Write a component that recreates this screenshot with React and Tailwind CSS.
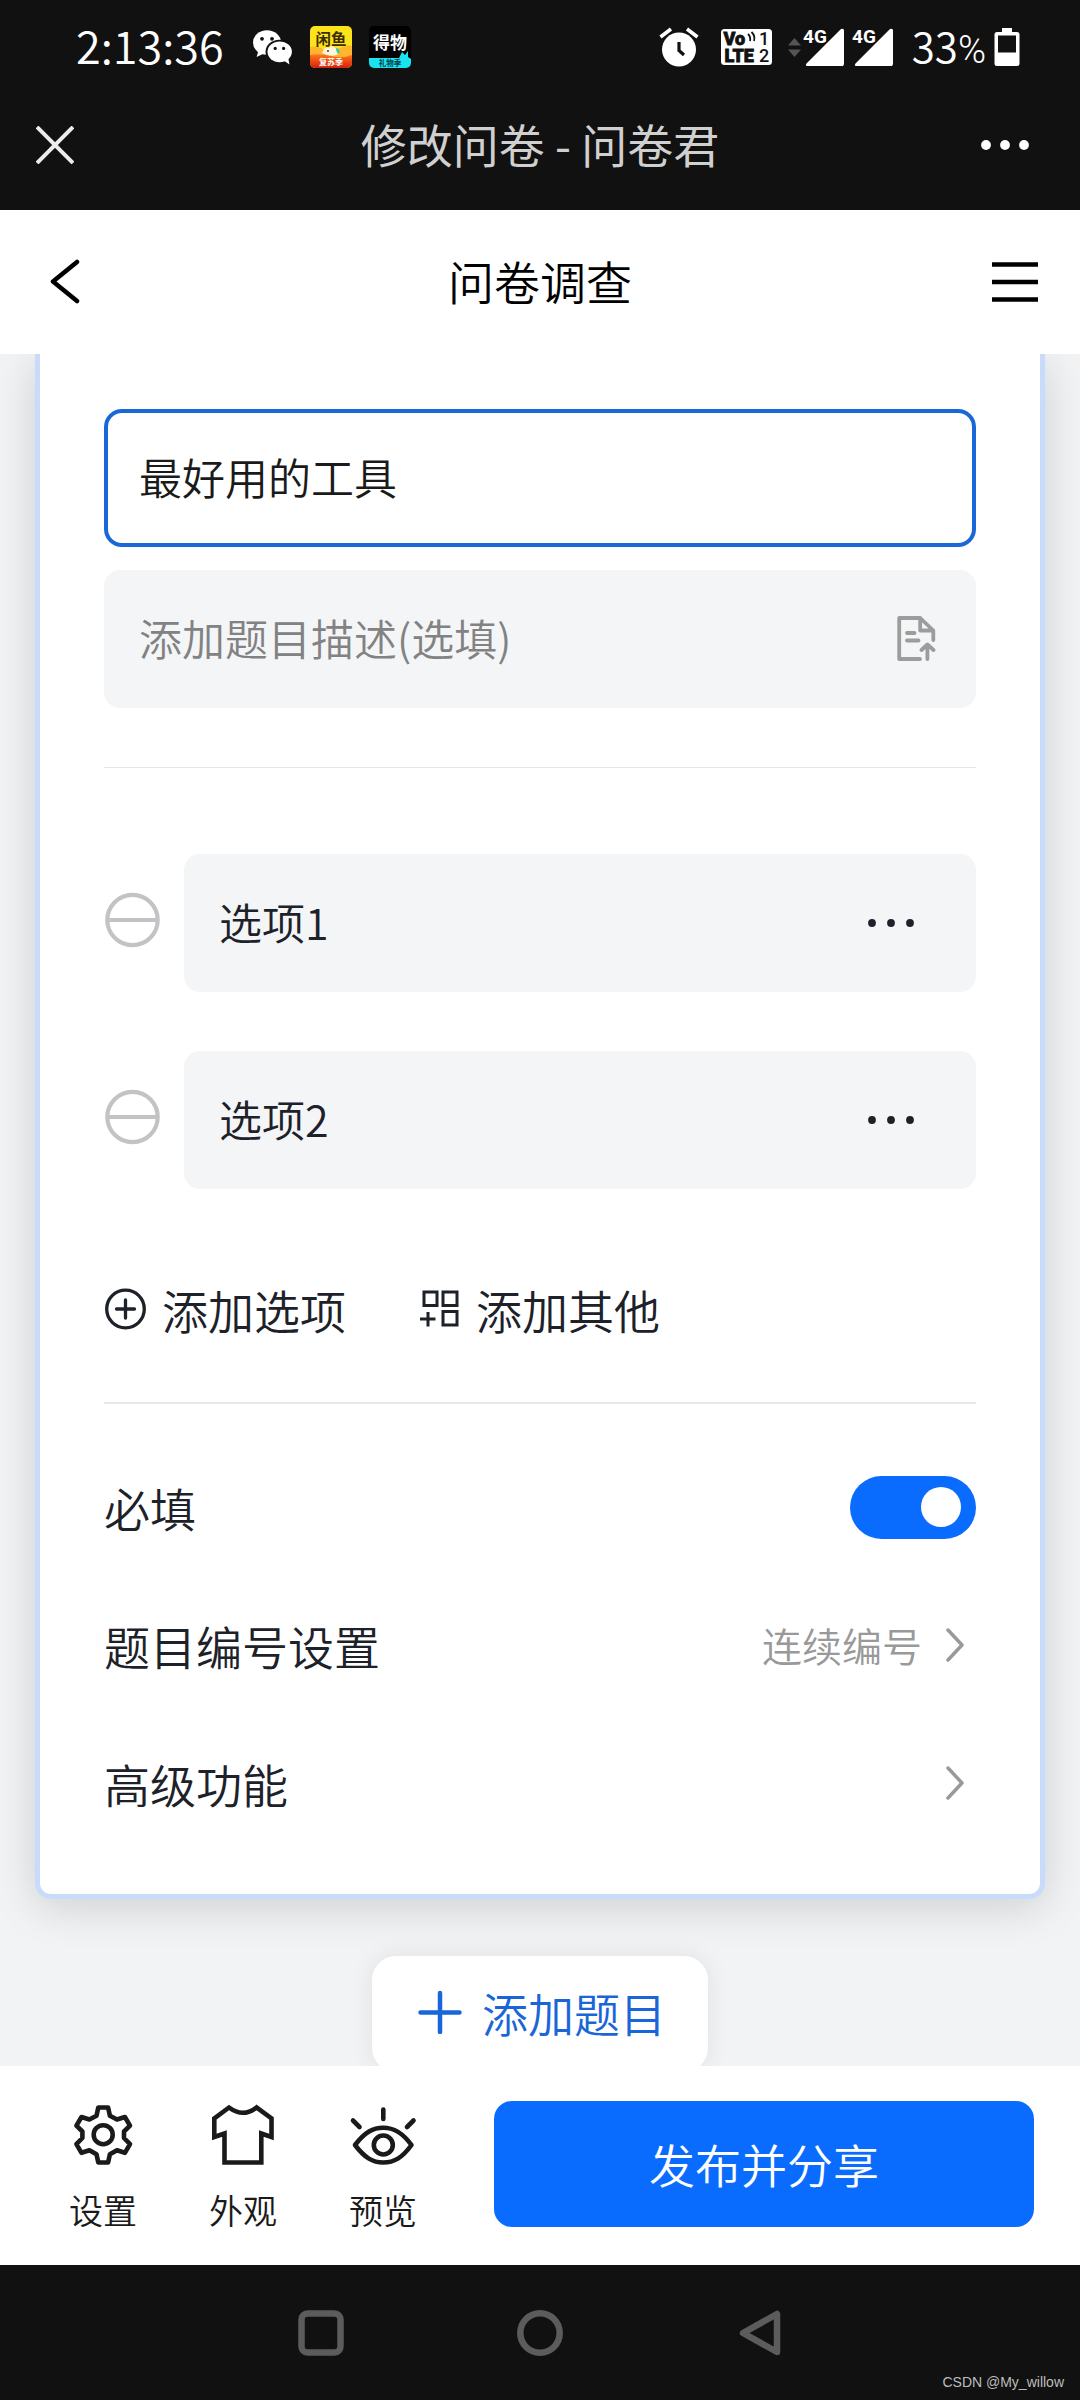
import { useState } from "react";

const FONT = "font-['Noto_Sans_CJK_SC','Noto_Sans',sans-serif] font-[350]";

function WechatIcon() {
  return (
    <svg className="h-9 w-10" viewBox="0 0 40 36" aria-hidden="true">
      <path d="M6 20 L3.6 28 L12 24 Z" fill="#fff" />
      <ellipse cx="14" cy="13.5" rx="14" ry="12.2" fill="#fff" />
      <ellipse cx="26.5" cy="22.8" rx="14" ry="12" fill="#111" />
      <path d="M30 31 L36.5 35.4 L35 28 Z" fill="#fff" />
      <ellipse cx="26.7" cy="22.8" rx="12.2" ry="10.4" fill="#fff" />
      <circle cx="9" cy="9.8" r="1.9" fill="#111" />
      <circle cx="19" cy="9.8" r="1.9" fill="#111" />
      <circle cx="22.2" cy="19.4" r="1.6" fill="#111" />
      <circle cx="30.6" cy="19.4" r="1.6" fill="#111" />
    </svg>
  );
}

function XianyuIcon() {
  return (
    <svg className="size-[42px]" viewBox="0 0 42 42" aria-hidden="true">
      <defs>
        <clipPath id="xy"><rect width="42" height="42" rx="5" /></clipPath>
        <linearGradient id="xyRed" x1="0" y1="0" x2="0" y2="1">
          <stop offset="0" stopColor="#ff7a1c" />
          <stop offset="1" stopColor="#d3200c" />
        </linearGradient>
      </defs>
      <g clipPath="url(#xy)">
        <rect width="42" height="42" fill="#ffe31a" />
        <path d="M0 21 Q8 19 14 24 T30 22 Q37 18 42 20 V32 H0 Z" fill="#ffb52e" />
        <path d="M0 29 Q10 27 21 30 T42 29 V42 H0 Z" fill="url(#xyRed)" />
        <text x="21" y="19" textAnchor="middle" fontSize="15.5" fontWeight="700" fill="#3a2c05">闲鱼</text>
        <path d="M12 27 Q15 20 19 22 Q22 18 25 22 Q30 24 28 28 Q22 32 12 27 Z" fill="#fff6e0" />
        <path d="M26 22 Q31 22 29 28 Q26 27 26 22 Z" fill="#3fc99a" />
        <circle cx="18" cy="25" r="1" fill="#5a3a10" />
        <text x="21" y="39" textAnchor="middle" fontSize="8" fontWeight="700" fill="#fff">复苏季</text>
      </g>
    </svg>
  );
}

function DewuIcon() {
  return (
    <svg className="size-[42px]" viewBox="0 0 42 42" aria-hidden="true">
      <defs><clipPath id="dw"><rect width="42" height="42" rx="5" /></clipPath></defs>
      <g clipPath="url(#dw)">
        <rect width="42" height="42" fill="#000" />
        <path d="M0 32 H30 L33 26 L36 29 L39 25 V31 L42 33 V42 H0 Z" fill="#19e3ee" />
        <text x="21" y="23" textAnchor="middle" fontSize="17" fontWeight="700" fill="#fff">得物</text>
        <text x="21" y="40" textAnchor="middle" fontSize="7.5" fontWeight="700" fill="#053a44">礼物季</text>
      </g>
    </svg>
  );
}

function AlarmIcon() {
  return (
    <svg className="size-10" viewBox="0 0 40 40" aria-hidden="true">
      <circle cx="20" cy="22.5" r="17" fill="#fff" />
      <path d="M1.5 10 L12 2 M38.5 10 L28 2" stroke="#fff" strokeWidth="3.6" />
      <path d="M20 15 V23.5 L25 28" stroke="#111" strokeWidth="3.2" fill="none" />
    </svg>
  );
}

function VolteIcon() {
  return (
    <svg className="h-9 w-[51px] overflow-visible" viewBox="0 0 51 36" aria-hidden="true">
      <rect width="51" height="36" rx="3.5" fill="#fff" />
      <g fill="#111" stroke="#111" strokeWidth="0.8" fontFamily="Roboto" fontWeight="900" fontSize="18">
        <text x="2.5" y="16">Vo</text>
        <text x="3.5" y="33">LTE</text>
      </g>
      <g fill="#111" fontFamily="Roboto" fontWeight="500" fontSize="18">
        <text x="38" y="16">1</text>
        <text x="38" y="33">2</text>
      </g>
      <path d="M27 5 Q30 8 29 12 M30.5 3 Q34.5 7 33 12" stroke="#111" strokeWidth="1.8" fill="none" />
    </svg>
  );
}

function SignalIcon() {
  return (
    <svg className="h-[38px] w-[106px] overflow-visible" viewBox="0 0 106 38" aria-hidden="true">
      <path d="M6.5 10 L13 17.5 H0 Z M6.5 29 L13 21.5 H0 Z" fill="#555" />
      {[0, 49].map((x) => (
        <g key={x} fill="#fff">
          <path d={`M${x + 55} 0.5 V38 H${x + 19} Q${x + 17} 37.5 ${x + 18.5} 35.5 L${x + 53} 1 Q${x + 55} 0 ${x + 56} 2 V36 Q${x + 56} 38 ${x + 54} 38 Z`} />
          <text x={x + 15} y="15" fontFamily="Roboto" fontWeight="700" fontSize="19">4G</text>
        </g>
      ))}
    </svg>
  );
}

function BatteryIcon() {
  return (
    <svg className="h-[38px] w-[26px]" viewBox="0 0 26 38" aria-hidden="true">
      <path fillRule="evenodd" d="M8 0 H18 V4 H23 Q25.500 4 25.500 6.500 V35.500 Q25.500 38 23 38 H3 Q0.500 38 0.500 35.500 V6.500 Q0.500 4 3 4 H8 Z M4 7.500 V24.500 H22 V7.500 Z" fill="#fff" />
    </svg>
  );
}

function Dots({ className, r }) {
  return (
    <svg className={className} viewBox="0 0 50 12" fill="currentColor" aria-hidden="true">
      <circle cx="6" cy="6" r={r} />
      <circle cx="25" cy="6" r={r} />
      <circle cx="44" cy="6" r={r} />
    </svg>
  );
}

function Chevron() {
  return (
    <svg className="h-[34px] w-[18px]" viewBox="0 0 18 34" fill="none" stroke="#999" strokeWidth="3.5" strokeLinecap="round" strokeLinejoin="round" aria-hidden="true">
      <path d="M2 2 L16 17 L2 32" />
    </svg>
  );
}

function OptionRow({ name, value, onChange }) {
  return (
    <li className="flex items-center gap-6">
      <button type="button" aria-label={`删除${name}`} className="shrink-0">
        <svg className="size-14 overflow-visible" viewBox="0 0 56 56" fill="none" stroke="#c3c3c6" strokeWidth="4.200" aria-hidden="true">
          <circle cx="28.500" cy="25" r="25.200" />
          <path d="M3 25 H54" />
        </svg>
      </button>
      <div className="flex h-[138px] min-w-0 flex-1 items-center rounded-2xl bg-[#f4f5f7] pr-[60px] pl-[35px]">
        <input
          aria-label={name}
          value={value}
          onChange={(e) => onChange(e.target.value)}
          className="h-16 min-w-0 flex-1 bg-transparent pb-1 text-[43px] text-[#1d2129] outline-none"
        />
        <button type="button" aria-label={`${name}更多操作`} className="text-[#1d2129]">
          <Dots className="h-3 w-[50px]" r="3.900" />
        </button>
      </div>
    </li>
  );
}

const TOOLS = [
  {
    label: "设置",
    icon: (
      <>
        <path d="M27.300 6.500 H37.100 L38.900 14.700 L46 18.500 L53.900 16 L59 24.700 L53 30.500 V37 L59 43.200 L53.900 51.800 L46 49.300 L38.900 53.300 L37.100 61.500 H27.300 L25.500 53.300 L18.400 49.300 L10.500 51.800 L5.400 43.200 L11.400 37 V30.500 L5.400 24.700 L10.500 16 L18.400 18.500 L25.500 14.700 Z" />
        <circle cx="32.200" cy="33.700" r="9.500" />
      </>
    ),
  },
  {
    label: "外观",
    icon: (
      <path strokeLinejoin="miter" d="M18 6.500 Q32 17 45.500 6.500 L60.500 17.500 V36 L50.300 32.500 V61.500 H13.500 V32.500 L3.300 36 V17.500 Z" />
    ),
  },
  {
    label: "预览",
    icon: (
      <>
        <path d="M4 44 C14 31 22 26.700 32.300 26.700 S51 31 60.500 44 C51 57 43 61.500 32.300 61.500 S14 57 4 44 Z" />
        <circle cx="32.300" cy="44" r="9.500" />
        <path d="M32.300 8.500 V18 M2 19.500 L8.500 26 M62.500 19.500 L56 26" />
      </>
    ),
  },
];

export default function App() {
  const [title, setTitle] = useState("最好用的工具");
  const [desc, setDesc] = useState("");
  const [options, setOptions] = useState(["选项1", "选项2"]);
  const [required, setRequired] = useState(true);

  return (
    <div className={`flex min-h-screen flex-col bg-[#f2f3f5] text-[#1d2129] ${FONT}`}>
      <div className="bg-[#111] pb-3.5 text-white">
        <div className="flex h-[94px] items-center justify-between pr-[60px] pl-[76px]">
          <div className="flex items-center gap-[17px]">
            <time className="w-40 pb-1 text-[45px] leading-[60px]">2:13:36</time>
            <WechatIcon />
            <XianyuIcon />
            <DewuIcon />
          </div>
          <div className="flex items-center">
            <AlarmIcon />
            <span className="w-[22px]" />
            <VolteIcon />
            <span className="w-4" />
            <SignalIcon />
            <span className="ml-[18px] flex items-baseline text-[42px] leading-[60px]">
              33<span className="font-['Roboto',sans-serif] text-[38px] font-light">%</span>
            </span>
            <span className="ml-2"><BatteryIcon /></span>
          </div>
        </div>
        <div className="grid h-[102px] grid-cols-[1fr_auto_1fr] items-center px-9">
          <button type="button" aria-label="关闭" className="justify-self-start">
            <svg className="size-[38px]" viewBox="0 0 38 38" stroke="#ececec" strokeWidth="4" aria-hidden="true">
              <path d="M1 1 L37 37 M37 1 L1 37" />
            </svg>
          </button>
          <h1 className="pb-1 text-[46px] leading-[64px] font-normal text-[#d0d0d0]">修改问卷 - 问卷君</h1>
          <button type="button" aria-label="更多" className="mr-3.5 justify-self-end">
            <Dots className="h-3 w-[50px]" r="4.900" />
          </button>
        </div>
      </div>

      <header className="relative z-10 grid h-36 grid-cols-[1fr_auto_1fr] items-center bg-white px-[42px] text-black">
        <button type="button" aria-label="返回" className="ml-2 justify-self-start">
          <svg className="h-[46px] w-[30px]" viewBox="0 0 30 46" fill="none" stroke="currentColor" strokeWidth="4.500" strokeLinecap="round" strokeLinejoin="round" aria-hidden="true">
            <path d="M27 3 L3 22.500 L27 42" />
          </svg>
        </button>
        <h2 className="pb-1 text-[46px] leading-[64px]">问卷调查</h2>
        <button type="button" aria-label="菜单" className="justify-self-end">
          <svg className="h-10 w-[46px]" viewBox="0 0 46 40" stroke="currentColor" strokeWidth="4.500" aria-hidden="true">
            <path d="M0 2.500 H46 M0 20 H46 M0 37.500 H46" />
          </svg>
        </button>
      </header>

      <main className="flex flex-1 flex-col px-[35px]">
        <section className="rounded-b-2xl border-x-5 border-b-5 border-[#c8dbfb] bg-white px-16 pt-[55px] pb-[42px] shadow-[0_8px_44px_rgba(0,0,0,0.15)]">
          <input
            aria-label="题目标题"
            value={title}
            onChange={(e) => setTitle(e.target.value)}
            className="block h-[138px] w-full rounded-[18px] border-4 border-[#1a68d8] px-[31px] pb-1 text-[43px] text-[#1a1a1a] outline-none"
          />
          <div className="mt-[23px] flex h-[138px] items-center rounded-2xl bg-[#f4f5f7] pr-10 pl-[35px]">
            <input
              aria-label="题目描述"
              value={desc}
              onChange={(e) => setDesc(e.target.value)}
              placeholder="添加题目描述(选填)"
              className="h-16 min-w-0 flex-1 bg-transparent pb-1 text-[43px] outline-none placeholder:text-[#828282]"
            />
            <button type="button" aria-label="导入描述">
              <svg className="h-[46px] w-[39px]" viewBox="0 0 39 46" fill="none" stroke="#9c9c9c" strokeWidth="3.800" strokeLinecap="round" strokeLinejoin="round" aria-hidden="true">
                <path d="M23 43 H2.200 V2 H23.200 L36.300 14.500 V24 M23.200 2 V14.500 H36.300" />
                <path d="M10 17 H17.500 M10 24.500 H21.500 M30.400 29 V43 M24.500 34 L30.400 28.500 L36.500 34" />
              </svg>
            </button>
          </div>

          <hr className="mt-[59px] border-t border-[#e5e6e8]" />

          <ul className="mt-[86px] flex flex-col gap-[59px]">
            {options.map((value, i) => (
              <OptionRow
                key={i}
                name={`选项${i + 1}`}
                value={value}
                onChange={(next) => setOptions(options.map((o, j) => (j === i ? next : o)))}
              />
            ))}
          </ul>

          <div className="mt-[88px] flex h-16 items-center gap-[74px] text-[46px] leading-[64px]">
            <button type="button" className="flex items-center gap-4">
              <svg className="size-[42px]" viewBox="0 0 42 42" fill="none" stroke="currentColor" strokeWidth="3.300" strokeLinecap="round" aria-hidden="true">
                <circle cx="21.500" cy="21" r="18.800" />
                <path d="M12.500 21 H30.500 M21.500 12 V30" />
              </svg>
              添加选项
            </button>
            <button type="button" className="flex items-center gap-4">
              <svg className="size-10" viewBox="0 0 40 40" fill="none" stroke="currentColor" strokeWidth="3" aria-hidden="true">
                <path d="M4 3 H17 V16.500 H4 Z M23 3 H37 V16.500 H23 Z M23 22.500 H37 V36 H23 Z M0 30 H15.500 M8 23 V37.500" />
              </svg>
              添加其他
            </button>
          </div>

          <hr className="mt-[61px] border-t-2 border-[#e8e8e8]" />

          <div className="mt-[34px] text-[46px] leading-[64px]">
            <label className="flex h-[138px] items-center justify-between">
              必填
              <input
                type="checkbox"
                role="switch"
                checked={required}
                onChange={(e) => setRequired(e.target.checked)}
                className="flex h-[63px] w-[126px] appearance-none items-center rounded-full bg-[#c9cdd4] px-[15px] before:block before:size-10 before:rounded-full before:bg-white checked:justify-end checked:bg-[#0a6cff]"
              />
            </label>
            <button type="button" className="flex h-[138px] w-full items-center pr-3">
              题目编号设置
              <span className="mr-6 ml-auto text-[40px] text-[#999]">连续编号</span>
              <Chevron />
            </button>
            <button type="button" className="flex h-[138px] w-full items-center justify-between pr-3">
              高级功能
              <Chevron />
            </button>
          </div>
        </section>

        <button
          type="button"
          className="mt-[57px] -mb-1.5 flex h-[116px] items-center gap-5 self-center rounded-3xl bg-white pr-[42px] pb-1 pl-[46px] text-[46px] leading-[64px] text-[#1a66d8] shadow-[0_0_24px_rgba(0,0,0,0.08)]"
        >
          <svg className="size-11" viewBox="0 0 44 44" fill="none" stroke="currentColor" strokeWidth="4.500" strokeLinecap="round" aria-hidden="true">
            <path d="M2.500 22.500 H41.500 M22 3 V42" />
          </svg>
          添加题目
        </button>
      </main>

      <footer className="relative z-10">
        <div className="flex items-start gap-[77px] bg-white pt-[35px] pr-[46px] pb-9 pl-[69px]">
          <div className="flex gap-[72px]">
            {TOOLS.map((tool) => (
              <button type="button" key={tool.label} className="flex w-[68px] flex-col items-center gap-[26px] text-[34px] leading-[38px] text-[#1a1a1a]">
                <svg className="size-16 overflow-visible" viewBox="0 0 64 64" fill="none" stroke="currentColor" strokeWidth="4.600" strokeLinecap="round" strokeLinejoin="round" aria-hidden="true">
                  {tool.icon}
                </svg>
                {tool.label}
              </button>
            ))}
          </div>
          <button type="button" className="h-[126px] flex-1 rounded-[18px] bg-[#0a6cff] pb-0.5 text-[46px] leading-[64px] text-white">
            发布并分享
          </button>
        </div>
        <div className="relative flex h-[135px] items-center justify-center gap-[173px] bg-[#111]">
          <button type="button" aria-label="最近任务">
            <svg className="size-[46px]" viewBox="0 0 46 46" fill="none" stroke="#5c5c5c" strokeWidth="6.500" aria-hidden="true">
              <rect x="3.500" y="3.500" width="39" height="39" rx="6" />
            </svg>
          </button>
          <button type="button" aria-label="主屏幕">
            <svg className="size-[46px]" viewBox="0 0 46 46" fill="none" stroke="#5c5c5c" strokeWidth="6.500" aria-hidden="true">
              <circle cx="23" cy="23" r="19.700" />
            </svg>
          </button>
          <button type="button" aria-label="返回上一页">
            <svg className="size-[46px]" viewBox="0 0 46 46" fill="none" stroke="#5c5c5c" strokeWidth="6.500" strokeLinejoin="round" aria-hidden="true">
              <path d="M41 4 V42 L7 23 Z" />
            </svg>
          </button>
          <p className="absolute right-4 bottom-2 font-['Liberation_Sans',sans-serif] text-[14px] leading-5 font-normal text-[#bdbdbd]">CSDN @My_willow</p>
        </div>
      </footer>
    </div>
  );
}
